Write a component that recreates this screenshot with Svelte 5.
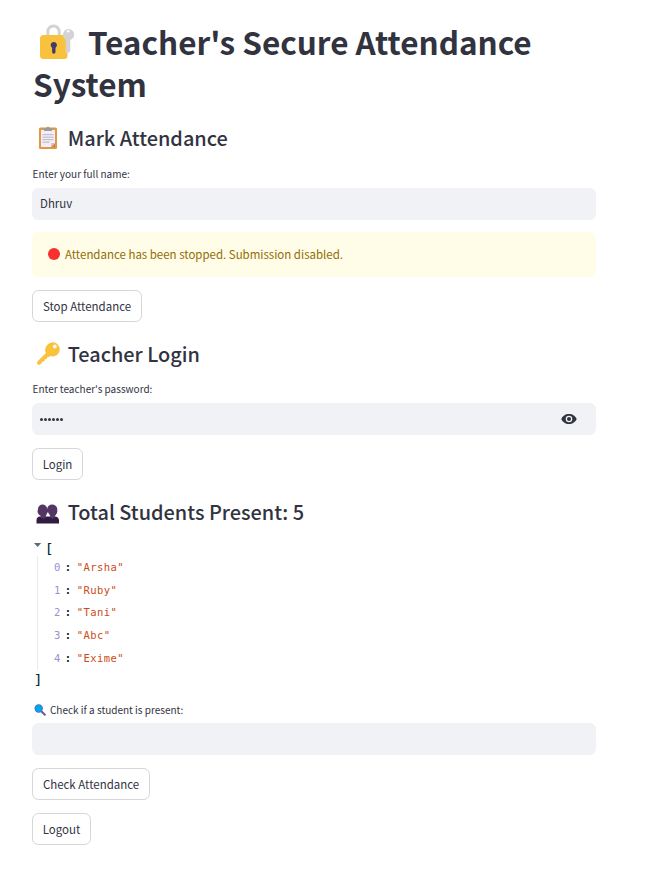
<script>
  const students = ['Arsha', 'Ruby', 'Tani', 'Abc', 'Exime'];
  let name = $state('Dhruv');
  let query = $state('');
</script>

<main>
  <h1>
    <svg class="lock" viewBox="0 0 36 36" width="36" height="36">
      <path d="M8.8 14V7.700a5.7 5.7 0 0 1 11.4 0V14" fill="none" stroke="#d3d3d5" stroke-width="3" />
      <rect x="1" y="11" width="27.5" height="24" rx="3.5" fill="#f9c23c" />
      <path d="M24 10.8a5.6 5.6 0 1 1 7.300 5.200v11.200l-1.6 1.6h-3V16A5.6 5.6 0 0 1 24 10.8Z" fill="#d3d3d5" />
      <circle cx="29.2" cy="7.3" r="1.3" fill="#fff" />
      <path d="M14.8 18a3.2 3.2 0 0 0-1.7 5.9v4.2a1.7 1.7 0 0 0 3.4 0v-4.2A3.2 3.2 0 0 0 14.8 18Z" fill="#433b6b" />
    </svg><span>Teacher's Secure Attendance</span> <span class="second">System</span>
  </h1>

  <h2 class="mark">
    <svg class="board" viewBox="0 0 20 24" width="20" height="24">
      <rect x="1" y="1.5" width="18" height="21.5" rx="1.5" fill="#e19747" />
      <path d="M3 4h14v13l-4 4H3Z" fill="#f3eef8" />
      <path d="M17 17v4h-4Z" fill="#ca8749" /><path d="M13 21v-3.2a.8.8 0 0 1 .8-.8H17Z" fill="#cdc4d6" />
      <path d="M6 2h2.2a1.9 1.9 0 0 1 3.6 0H14v3H6Z" fill="#9b9b9b" />
      <path d="M4.5 8.7h11M4.5 11.2h11M4.5 13.7h11M4.5 16.2h7" stroke="#b4acbc" stroke-width=".9" />
    </svg><span>Mark Attendance</span>
  </h2>
  <label class="first-label" for="name">Enter your full name:</label>
  <input id="name" bind:value={name} autocomplete="off" />

  <div class="alert">
    <i></i><span>Attendance has been stopped. Submission disabled.</span>
  </div>
  <button style:width="110px">Stop Attendance</button>

  <h2 class="login">
    <svg class="key" viewBox="0 0 24 24" width="24" height="24">
      <path fill-rule="evenodd" d="M11 3.3a7 7 0 1 1 3.2 10.6l-1.4 1.2-1.7.1-.3 1.8-2 .2-.3 2-1.8.3-2 2.6a2 2 0 0 1-3.3-.2 2 2 0 0 1 .3-2.6l8.2-8.2A7 7 0 0 1 11 3.3ZM17.5 3.2a1.8 1.8 0 1 0 2.6 2.6 1.8 1.8 0 0 0-2.6-2.6Z" fill="#f9c23c" />
    </svg><span>Teacher Login</span>
  </h2>
  <label for="password">Enter teacher's password:</label>
  <div class="field" id="password">
    <span class="dots">{#each Array(6) as _}<i></i>{/each}</span>
    <svg viewBox="0 0 16 12" width="16" height="12">
      <path fill-rule="evenodd" d="M8 1C4.4 1 1.400 3.100.3 6c1.100 2.900 4.100 5 7.700 5s6.600-2.100 7.700-5C14.600 3.100 11.600 1 8 1Zm0 1.700a3.300 3.300 0 1 1 0 6.600 3.300 3.300 0 0 1 0-6.600Z" fill="#31333f" />
      <circle cx="8" cy="6" r="2" fill="#31333f" />
    </svg>
  </div>
  <button style:width="51px">Login</button>

  <h2 class="total">
    <svg class="people" viewBox="0 0 24 20" width="24" height="20">
      <path d="M.5 19.500v-3.500a4 4 0 0 1 3.500-3.500h14.500a4 4 0 0 1 4.500 3.500v3.500Z" fill="#321b41" />
      <path d="M2 5c.2-6 8.800-6 9.200 0 .2-6 9.600-6 10.100 0v2.500c-.3 2.500-1.500 3.500-2.500 4.500v1.500c-1 1.400-3.500 1.400-4.500 0V12l-2.500-4-2 4v1.500c-1 1.400-4 1.400-5 0V12C3.300 11 1.700 9.500 1.500 7.500Z" fill="#533566" />
    </svg><span>Total Students Present: 5</span>
  </h2>

  <div class="json">
    <div class="open"><svg viewBox="0 0 8 5" width="8" height="5"><path d="M0 0h7.200L3.600 4Z" fill="#586e75" /></svg><b>[</b></div>
    <div class="items">
      {#each students as student, i}
        <div class="row"><span class="index">{i}</span><b>:</b><span class="value">"{student}"</span></div>
      {/each}
    </div>
    <div class="close"><b>]</b></div>
  </div>

  <label class="search" for="query">
    <svg viewBox="0 0 12 12" width="12" height="12">
      <path d="m7.300 7.300 3.500 3.500" stroke="#6c579d" stroke-width="2" stroke-linecap="round" />
      <circle cx="4.700" cy="4.500" r="4.200" fill="#5269ab" />
      <circle cx="4.700" cy="4.500" r="3.400" fill="#00a6ed" />
    </svg>Check if a student is present:
  </label>
  <input id="query" bind:value={query} autocomplete="off" />
  <button style:width="118px">Check Attendance</button>
  <button style:width="59px">Logout</button>
</main>

<style>
  :global(body) { margin: 0; background: #fff; }
  main {
    box-sizing: border-box;
    width: 596px;
    height: 880px;
    padding: 20px 0 0 32px;
    display: flex;
    flex-direction: column;
    align-items: flex-start;
    font-family: "Noto Sans CJK SC", "Noto Sans", sans-serif;
    color: #31333f;
  }
  h1, h2 { margin: 0; white-space: nowrap; }
  h1 { width: 563px; height: 84px; padding-left: 1px; font-size: 31.500px; letter-spacing: -.030px; line-height: 42px; font-weight: 700; white-space: normal; }
  h1 svg { margin: 0 13px 0 6px; vertical-align: -5px; }
  h2 { display: flex; height: 27px; font-size: 19.900px; line-height: 27px; font-weight: 500; }
  h2 svg { flex: none; }
  .mark { margin-top: 20px; }
  .board { margin: 2px 9.700px 0 6px; }
  .login { margin-top: 18px; }
  .key { margin: 2px 7.700px 0 4px; }
  .total { margin-top: 18px; }
  .people { margin: 6px 7.700px 0 4px; }
  label { display: flex; height: 18px; margin: 13px 0 5px; padding-left: .600px; font-size: 10px; line-height: 18px; white-space: pre; }
  .first-label { margin-top: 14px; margin-bottom: 5px; }
  input, .field {
    box-sizing: border-box;
    width: 564px;
    height: 32px;
    flex: none;
    border: 0;
    border-radius: 6.400px;
    background: #f0f2f6;
    padding: 0 8px 2px;
    color: #31333f;
    font: 11.480px "Noto Sans CJK SC", sans-serif;
    outline: none;
  }
  .field { display: flex; align-items: center; justify-content: space-between; padding: 0 19px 0 8px; }
  .dots { display: flex; gap: 1px; }
  .dots i { width: 3px; height: 3px; border-radius: 50%; background: #31333f; }
  .alert {
    box-sizing: border-box;
    display: flex;
    align-items: center;
    width: 564px;
    height: 45px;
    margin: 12px 0 0;
    padding: 0 0 1px 16px;
    border-radius: 6.400px;
    background: #fffce7;
    color: #926c05;
    font-size: 11.480px;
  }
  .alert i { width: 12px; height: 12px; margin-right: 5px; border-radius: 50%; background: #f8312f; }
  button {
    box-sizing: border-box;
    height: 32px;
    flex: none;
    margin: 13px 0 0;
    padding: 0;
    border: 1px solid #d6d6d9;
    border-radius: 6.400px;
    background: #fff;
    color: #31333f;
    font: 11.480px "Noto Sans CJK SC", sans-serif;
    white-space: nowrap;
  }
  .json { margin-top: 14px; font-family: "Noto Sans Mono CJK SC", "Liberation Mono", monospace; color: #002b36; }
  .open { display: flex; height: 17px; line-height: 17px; padding-left: 2px; font-size: 12.500px; }
  .open svg { margin: 4px 4px 0 0; }
  .items { box-sizing: border-box; height: 114px; margin-left: 5px; border-left: 1px solid #ebebeb; }
  .row { display: flex; height: 22.700px; line-height: 23px; padding-left: 16px; font-family: "DejaVu Sans Mono", monospace; font-size: 10.500px; letter-spacing: .420px; }
  .row b { width: 7px; margin: 0 5px 0 4px; }
  .index { color: #9292d4; }
  .value { color: #cb4b16; }
  .close { height: 18px; line-height: 17px; padding-left: 3px; font-size: 12.500px; }
  .search { margin-top: 13px; margin-bottom: 4px; }
  .search svg { margin: 3px 4px 0 1.400px; }
</style>
